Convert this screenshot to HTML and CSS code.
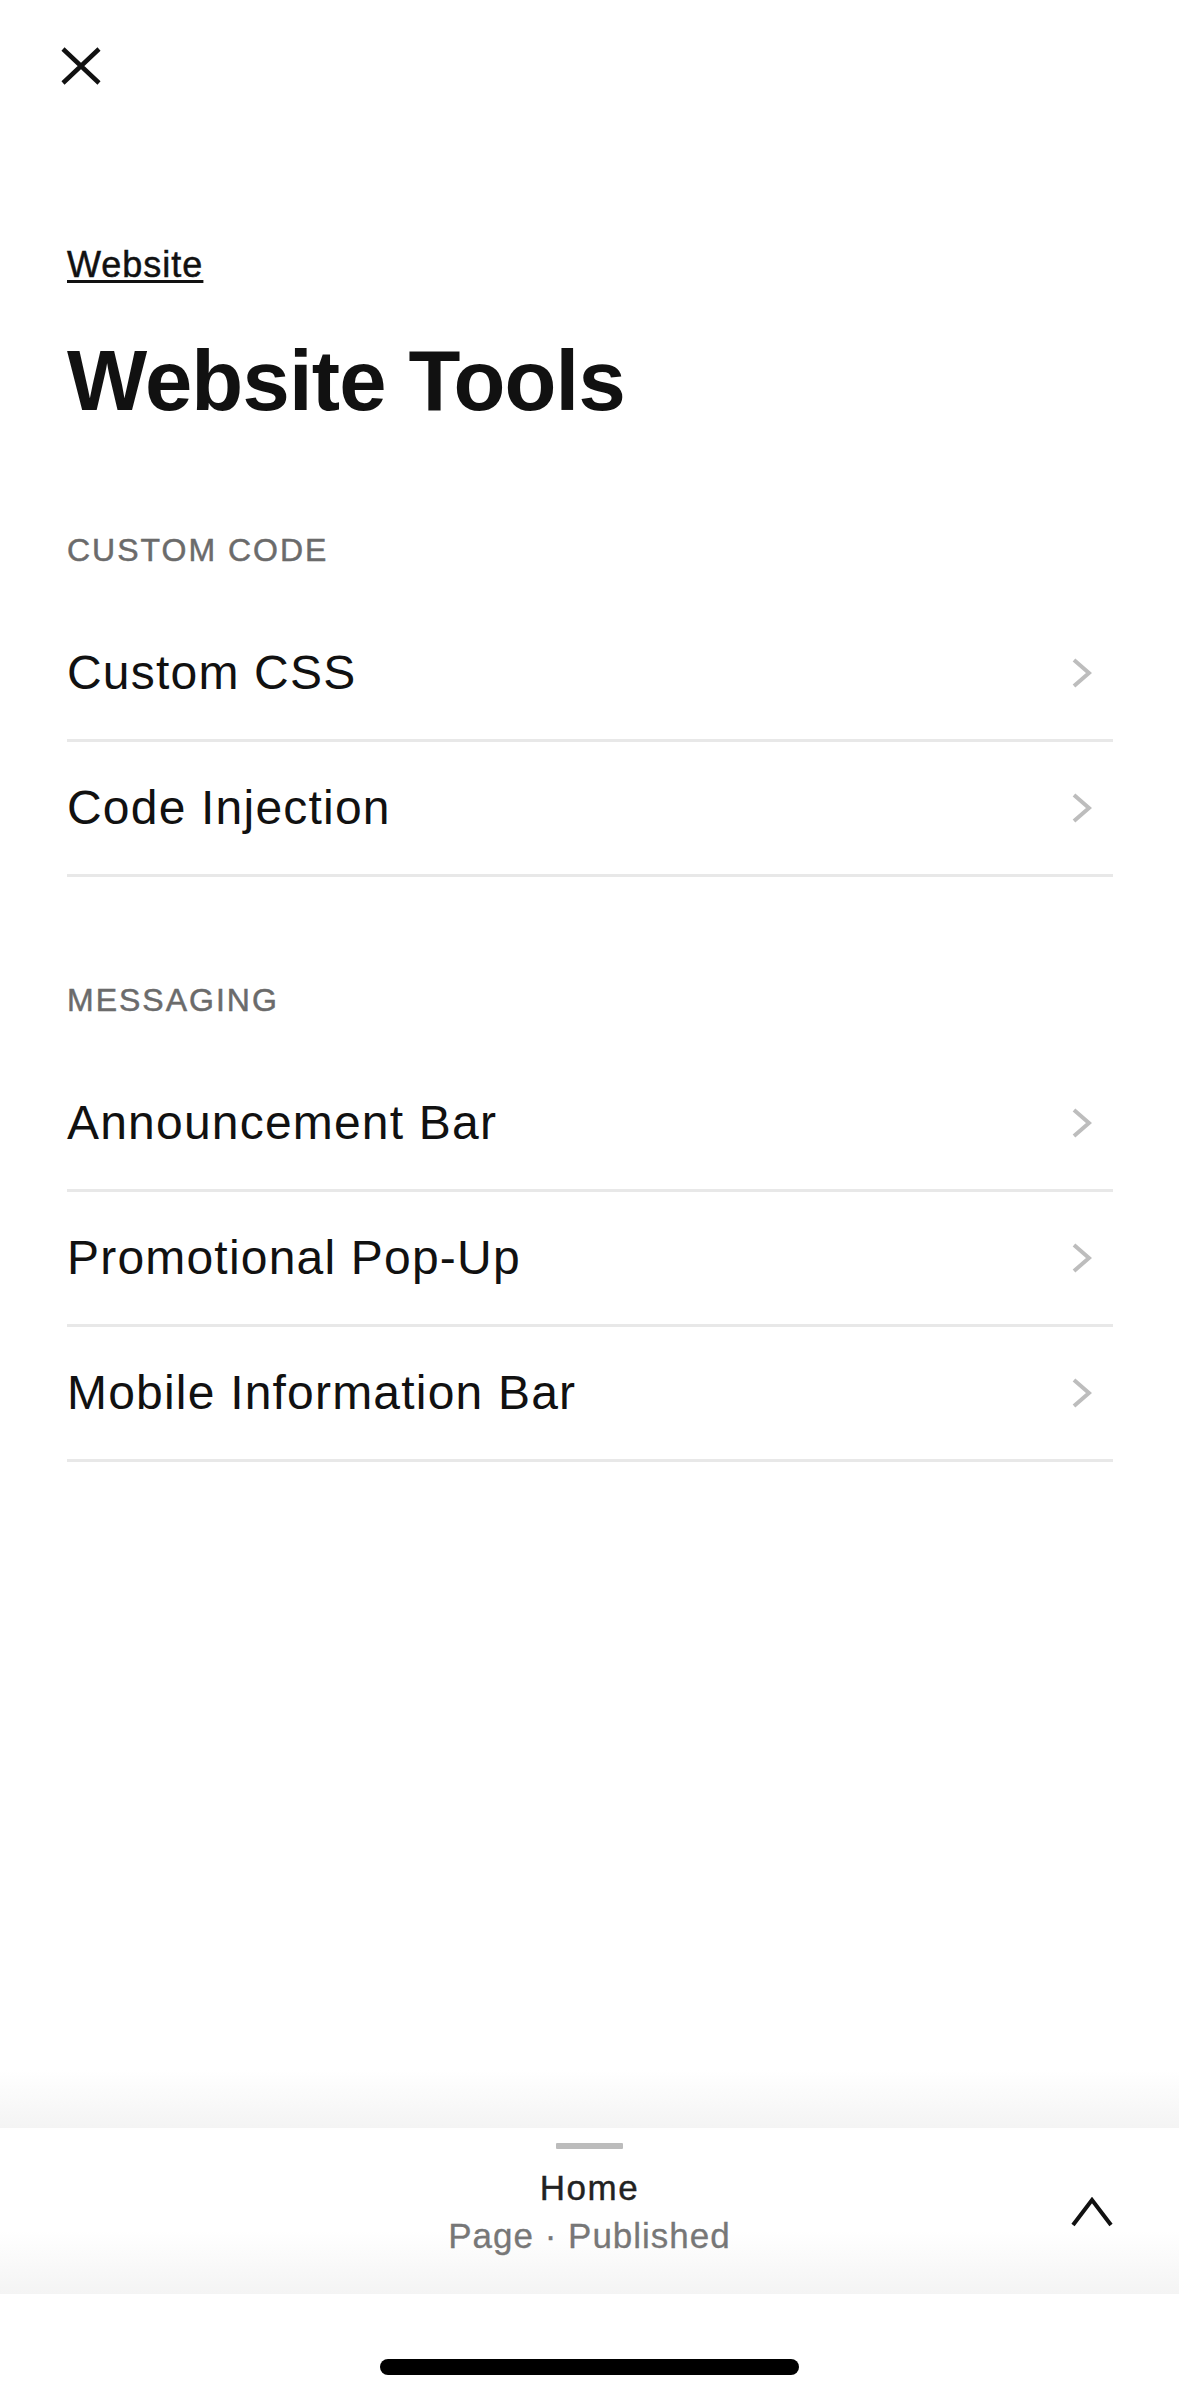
FILE: index.html
```html
<!DOCTYPE html>
<html lang="en">
<head>
<meta charset="utf-8">
<title>Website Tools</title>
<link rel="stylesheet" href="styles.css">
</head>
<body>
<div class="page">
  <header class="topbar">
    <svg class="close" width="40" height="38" viewBox="0 0 40 38" aria-label="Close">
      <path d="M2 2 L38 36 M38 2 L2 36" stroke="#111" stroke-width="4.5" fill="none"/>
    </svg>
  </header>

  <main class="content">
    <a class="crumb" href="#">Website</a>
    <h1 class="title">Website Tools</h1>

    <section class="group group-first">
      <h2 class="group-label">CUSTOM CODE</h2>
      <ul class="list">
        <li class="row"><span class="row-text">Custom CSS</span><svg class="chev" width="21" height="30" viewBox="0 0 21 30"><path d="M3 2 L18 15 L3 28" stroke="#bdbdbd" stroke-width="4" fill="none"/></svg></li>
        <li class="row"><span class="row-text">Code Injection</span><svg class="chev" width="21" height="30" viewBox="0 0 21 30"><path d="M3 2 L18 15 L3 28" stroke="#bdbdbd" stroke-width="4" fill="none"/></svg></li>
      </ul>
    </section>

    <section class="group">
      <h2 class="group-label">MESSAGING</h2>
      <ul class="list">
        <li class="row"><span class="row-text">Announcement Bar</span><svg class="chev" width="21" height="30" viewBox="0 0 21 30"><path d="M3 2 L18 15 L3 28" stroke="#bdbdbd" stroke-width="4" fill="none"/></svg></li>
        <li class="row"><span class="row-text">Promotional Pop-Up</span><svg class="chev" width="21" height="30" viewBox="0 0 21 30"><path d="M3 2 L18 15 L3 28" stroke="#bdbdbd" stroke-width="4" fill="none"/></svg></li>
        <li class="row"><span class="row-text">Mobile Information Bar</span><svg class="chev" width="21" height="30" viewBox="0 0 21 30"><path d="M3 2 L18 15 L3 28" stroke="#bdbdbd" stroke-width="4" fill="none"/></svg></li>
      </ul>
    </section>
  </main>

  <footer class="footer">
    <div class="fade"></div>
    <div class="panel">
      <div class="handle"></div>
      <div class="panel-row">
        <div class="panel-side"></div>
        <div class="panel-text">
          <div class="panel-title">Home</div>
          <div class="panel-sub">Page · Published</div>
        </div>
        <div class="panel-side panel-side-right">
          <svg class="caret" width="42" height="30" viewBox="0 0 42 30"><path d="M2 28 L21 3 L40 28" stroke="#111" stroke-width="4" fill="none" stroke-linejoin="miter"/></svg>
        </div>
      </div>
    </div>
    <div class="home-area">
      <div class="home-indicator"></div>
    </div>
  </footer>
</div>
</body>
</html>
```

FILE: styles.css
```css
* { box-sizing: border-box; }

html, body {
  margin: 0;
  padding: 0;
  background: #ffffff;
}

body {
  font-family: "Liberation Sans", Arial, sans-serif;
  color: #111111;
}

.page {
  min-height: 2396px;
  display: flex;
  flex-direction: column;
}

.topbar {
  padding: 47px 0 0 61px;
  height: 85px;
}

.close { display: block; }

.content {
  flex: 1;
  margin-top: 162px;
  padding: 0 66px 0 67px;
}

.crumb {
  display: inline-block;
  font-size: 36px;
  line-height: 1;
  color: #111;
  letter-spacing: 1px;
  -webkit-text-stroke: 0.5px #111;
  text-decoration: underline;
  text-decoration-thickness: 3px;
  text-underline-offset: 3px;
}

.title {
  margin: 55px 0 0;
  font-size: 85px;
  font-weight: 700;
  line-height: 1;
  letter-spacing: -0.8px;
  color: #111;
}

.group { margin-top: 107px; }
.group-first { margin-top: 111px; }

.group-label {
  margin: 0 0 41px;
  font-size: 32px;
  font-weight: 400;
  line-height: 1;
  letter-spacing: 2px;
  color: #6b6b6b;
  -webkit-text-stroke: 0.5px #6b6b6b;
}

.list {
  list-style: none;
  margin: 0;
  padding: 0;
}

.row {
  height: 135px;
  display: flex;
  align-items: center;
  justify-content: space-between;
  border-bottom: 3px solid #e8e8e8;
}

.row-text {
  font-size: 48px;
  line-height: 1;
  letter-spacing: 1.2px;
  color: #111;
}

.chev {
  display: block;
  margin-right: 21px;
}

.footer {
  display: flex;
  flex-direction: column;
}

.fade {
  height: 58px;
  background: linear-gradient(to bottom, #ffffff, #f4f4f4);
}

.panel {
  height: 166px;
  padding-top: 15px;
  background: linear-gradient(to bottom, #ffffff 0%, #ffffff 62%, #f4f4f4 100%);
}

.handle {
  width: 67px;
  height: 6px;
  margin: 0 auto 21px;
  background: #bcbcbc;
  border-radius: 1px;
}

.panel-row {
  display: grid;
  grid-template-columns: 1fr auto 1fr;
  align-items: center;
}

.panel-text {
  text-align: center;
  font-size: 35px;
  line-height: 1;
  letter-spacing: 1px;
}

.panel-title {
  color: #222;
  letter-spacing: 1.5px;
  -webkit-text-stroke: 0.4px #222;
}

.panel-sub {
  margin-top: 13px;
  color: #777;
  -webkit-text-stroke: 0.3px #777;
}

.panel-side-right {
  display: flex;
  justify-content: flex-end;
  padding-right: 66px;
}

.caret { display: block; }

.home-area {
  height: 102px;
  padding-top: 65px;
}

.home-indicator {
  width: 419px;
  height: 16px;
  margin: 0 auto;
  background: #000;
  border-radius: 8px;
}
```
